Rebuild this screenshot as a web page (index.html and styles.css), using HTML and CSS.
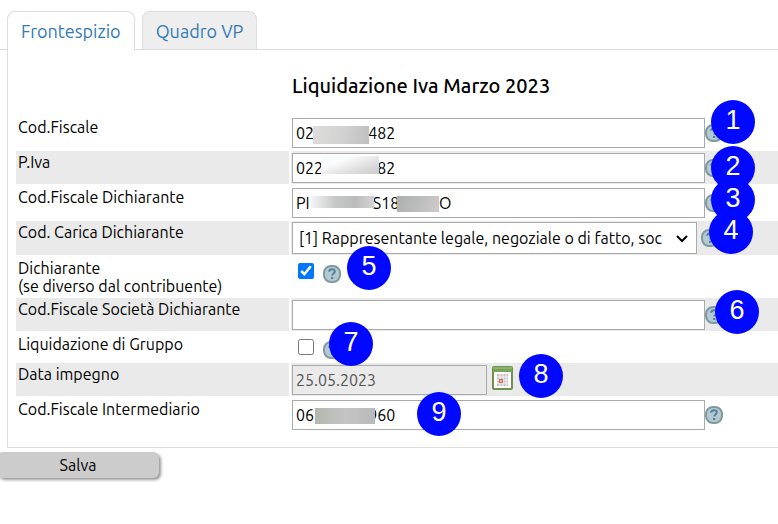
FILE: index.html
```html
<!DOCTYPE html>
<html lang="it">
  <head>
    <meta charset="UTF-8" />
    <meta name="viewport" content="width=device-width, initial-scale=1.0" />
    <title>Liquidazione Iva</title>
    <link rel="stylesheet" href="styles.css">
  </head>
  <body>
    <svg class="sprite" aria-hidden="true">
      <symbol id="help" viewBox="0 0 18 18">
        <rect x="1" y="1" width="16" height="16" rx="7" fill="#b4cad0" stroke="#7f9a9e" stroke-width="2" />
        <path d="M6.2 6.8C6.3 5 7.5 4.3 9 4.3c1.700 0 2.800.9 2.800 2.300 0 1.900-2.600 2-2.600 4" fill="none" stroke="#5580a3" stroke-width="2" />
        <path d="M8 12h2.300v2H8z" fill="#5580a3" />
      </symbol>
    </svg>

    <nav class="tabs">
      <a href="#frontespizio" class="tab active">Frontespizio</a>
      <a href="#quadro-vp" class="tab">Quadro VP</a>
    </nav>

    <form id="dichiarazione" onsubmit="return false">
      <div class="panel" id="frontespizio">
        <h1 class="title">Liquidazione Iva Marzo 2023</h1>

        <div class="row">
          <label class="label" for="codFiscale">Cod.Fiscale</label>
          <div class="field">
            <input type="text" class="text-input" id="codFiscale" value="02&#8199;&#8199;&#8199;&#8199;&#8199;&#8199;482">
            <span class="mask mask-cf"></span>
            <svg class="help"><use href="#help" /></svg>
            <span class="badge badge-1">1</span>
          </div>
        </div>

        <div class="row">
          <label class="label" for="pIva">P.Iva</label>
          <div class="field">
            <input type="text" class="text-input" id="pIva" value="022&#8199;&#8199;&#8199;&#8199;&#8199;&#8199;82">
            <span class="mask mask-piva"></span>
            <svg class="help"><use href="#help" /></svg>
            <span class="badge badge-2">2</span>
          </div>
        </div>

        <div class="row">
          <label class="label" for="cfDichiarante">Cod.Fiscale Dichiarante</label>
          <div class="field">
            <input type="text" class="text-input" id="cfDichiarante" value="PI&#8199;&#8199;&#8199;&#8199;&#8199;&#8199;&#8199;S18&#8199;&#8199;&#8199;&#8199;&nbsp;O">
            <span class="mask mask-dich-a"></span>
            <span class="mask mask-dich-b"></span>
            <svg class="help"><use href="#help" /></svg>
            <span class="badge badge-3">3</span>
          </div>
        </div>

        <div class="row">
          <label class="label" for="carica">Cod. Carica Dichiarante</label>
          <div class="field">
            <span class="select-wrap">
              <select class="select" id="carica">
                <option>[1] Rappresentante legale, negoziale o di fatto, soc</option>
              </select>
              <svg class="chevron" viewBox="0 0 14 10"><path d="M2 2l5 5 5-5" /></svg>
            </span>
            <svg class="help"><use href="#help" /></svg>
            <span class="badge badge-4">4</span>
          </div>
        </div>

        <div class="row">
          <label class="label" for="dichiarante">Dichiarante<br>(se diverso dal contribuente)</label>
          <div class="field check-field">
            <input type="checkbox" class="check" id="dichiarante" checked>
            <svg class="help"><use href="#help" /></svg>
            <span class="badge badge-5">5</span>
          </div>
        </div>

        <div class="row">
          <label class="label" for="cfSocieta">Cod.Fiscale Società Dichiarante</label>
          <div class="field">
            <input type="text" class="text-input" id="cfSocieta">
            <svg class="help"><use href="#help" /></svg>
            <span class="badge badge-6">6</span>
          </div>
        </div>

        <div class="row">
          <label class="label" for="gruppo">Liquidazione di Gruppo</label>
          <div class="field check-field">
            <input type="checkbox" class="check" id="gruppo">
            <svg class="help"><use href="#help" /></svg>
            <span class="badge badge-7">7</span>
          </div>
        </div>

        <div class="row">
          <label class="label" for="dataImpegno">Data impegno</label>
          <div class="field">
            <input type="text" class="text-input date-input" id="dataImpegno" value="25.05.2023" disabled>
            <button type="button" class="calendar" aria-label="Calendario">
              <svg viewBox="0 0 21 24">
                <rect x="1" y="1" width="19" height="22" rx="1" fill="#fff" stroke="#6f9150" stroke-width="2" />
                <path d="M1 1h19v5H1z" fill="#76a354" />
                <path d="M1 2h19" stroke="#a3c486" />
                <path d="M5 8h11v12H5z" fill="#c4c4c4" />
                <path d="M5 11h11M5 14h11M5 17h11M8 8v12M11 8v12M14 8v12" stroke="#f5f5f5" />
                <rect x="7.500" y="13.500" width="3" height="3" fill="#f3b9a2" stroke="#d9694a" />
              </svg>
            </button>
            <span class="badge badge-8">8</span>
          </div>
        </div>

        <div class="row">
          <label class="label" for="cfIntermediario">Cod.Fiscale Intermediario</label>
          <div class="field">
            <input type="text" class="text-input" id="cfIntermediario" value="06&#8199;&#8199;&#8199;&#8199;&#8199;&#8199;960">
            <span class="mask mask-int"></span>
            <svg class="help"><use href="#help" /></svg>
            <span class="badge badge-9">9</span>
          </div>
        </div>
      </div>

      <button type="submit" class="save">Salva</button>
    </form>
  </body>
</html>
```
FILE: styles.css
```css
* {
  box-sizing: border-box;
}

body {
  font-family: Ubuntu, 'Noto Sans', sans-serif;
  font-size: 16px;
  line-height: 18px;
  margin: 0;
  padding: 11px 0 40px;
  color: #000;
  background-color: #fff;
  overflow-x: hidden;
}

.sprite {
  display: none;
}

/* Tabs */
.tabs {
  display: flex;
  gap: 7px;
  padding-left: 7px;
  border-bottom: 1px solid #ddd;
}

.tab {
  padding: 9px 13px 8px;
  border: 1px solid #ddd;
  border-bottom: 0;
  border-radius: 8px 8px 0 0;
  background-color: #eee;
  color: #337ab7;
  font-size: 18px;
  line-height: 20px;
  text-decoration: none;
}

.tab.active {
  background-color: #fff;
  margin-bottom: -1px;
}

/* Form panel */
.panel {
  display: flex;
  flex-direction: column;
  gap: 2px;
  margin-left: 7px;
  padding: 24px 0 16px 8px;
  border: 1px solid #ddd;
  border-width: 0 0 1px 1px;
}

.title {
  margin: 0 0 16px;
  padding-left: 276px;
  font-size: 20px;
  line-height: 24px;
  font-weight: 500;
}

.row {
  display: flex;
  gap: 2px;
}

.label {
  flex: 0 0 273px;
  padding: 2px 2px 1px;
}

.field {
  position: relative;
  flex: 1;
  display: flex;
  align-items: center;
  min-height: 33px;
  padding: 1px;
}

.row:nth-child(odd) .label,
.row:nth-child(odd) .field {
  background-color: #eaeaea;
}

.text-input,
.select {
  border: 1px solid #aaa;
  border-radius: 0;
  background-color: #fff;
  color: #000;
  font-family: inherit;
  font-size: 16px;
}

.text-input {
  width: 413px;
  height: 30px;
  padding: 1px 3px;
}

.date-input {
  width: 195px;
  background-color: #eaeaea;
  color: #545454;
}

.select-wrap {
  position: relative;
  width: 405px;
  margin-right: 4px;
}

.select {
  display: block;
  width: 100%;
  height: 32px;
  padding: 0 6px;
  appearance: none;
}

.chevron {
  position: absolute;
  top: 12px;
  right: 8px;
  width: 14px;
  height: 10px;
  fill: none;
  stroke: #000;
  stroke-width: 2;
  pointer-events: none;
}

.help {
  flex: none;
  width: 18px;
  height: 18px;
}

.check-field {
  min-height: 28px;
  max-height: 28px;
}

.check {
  width: 16px;
  height: 16px;
  margin: 0 9px 0 6px;
}

.check-field .help {
  margin-top: 5px;
}

.calendar {
  width: 21px;
  height: 24px;
  margin: 0 0 4px 5px;
  padding: 0;
  border: 0;
  background: none;
}

.calendar svg {
  display: block;
}

/* Blurred personal data */
.mask {
  position: absolute;
  top: 10px;
  height: 16px;
}

.mask-cf {
  left: 22px;
  width: 56px;
  height: 18px;
  background: linear-gradient(100deg, #dedddc, #d2d2d2 50%, #bfbfbf);
}

.mask-piva {
  top: 5px;
  left: 30px;
  width: 58px;
  height: 18px;
  background: linear-gradient(160deg, #fafbfc 30%, #e4e4e4 60%, #cacaca);
}

.mask-dich-a {
  left: 20px;
  width: 63px;
  height: 12px;
  background: linear-gradient(90deg, #f3f6f6, #c5c7c6 40%, #bbbcbb 70%, #d4d5d3);
}

.mask-dich-b {
  left: 106px;
  width: 42px;
  background: linear-gradient(110deg, #adb0b0, #bcbcbc 50%, #cfcaca);
}

.mask-int {
  left: 24px;
  width: 60px;
  background: linear-gradient(90deg, #b3b7ab, #c4c5c4 50%, #b9b9b9);
}

/* Numbered callouts over the fields */
.badge {
  position: absolute;
  z-index: 1;
  width: 44px;
  height: 44px;
  border-radius: 50%;
  background-color: #0008ff;
  color: #fff;
  font-family: 'Liberation Sans', Arial, sans-serif;
  font-size: 27px;
  line-height: 41px;
  text-align: center;
}

.badge-1 { left: 420px; top: -16px; }
.badge-2 { left: 420px; top: -5px; }
.badge-3 { left: 420px; top: -8px; }
.badge-4 { left: 418px; top: -11px; }
.badge-5 { left: 56px; top: -11px; }
.badge-6 { left: 424px; top: -8px; }
.badge-7 { left: 38px; top: -11px; }
.badge-8 { left: 228px; top: -9px; }
.badge-9 { left: 126px; top: -6px; }

.save {
  display: block;
  width: 162px;
  height: 26px;
  margin: 4px 0 0 -3px;
  padding: 0;
  border: 0;
  border-radius: 6px;
  background-color: #ccc;
  box-shadow: 2px 2px 3px #999;
  color: #000;
  font-family: inherit;
  font-size: 16px;
}
```
